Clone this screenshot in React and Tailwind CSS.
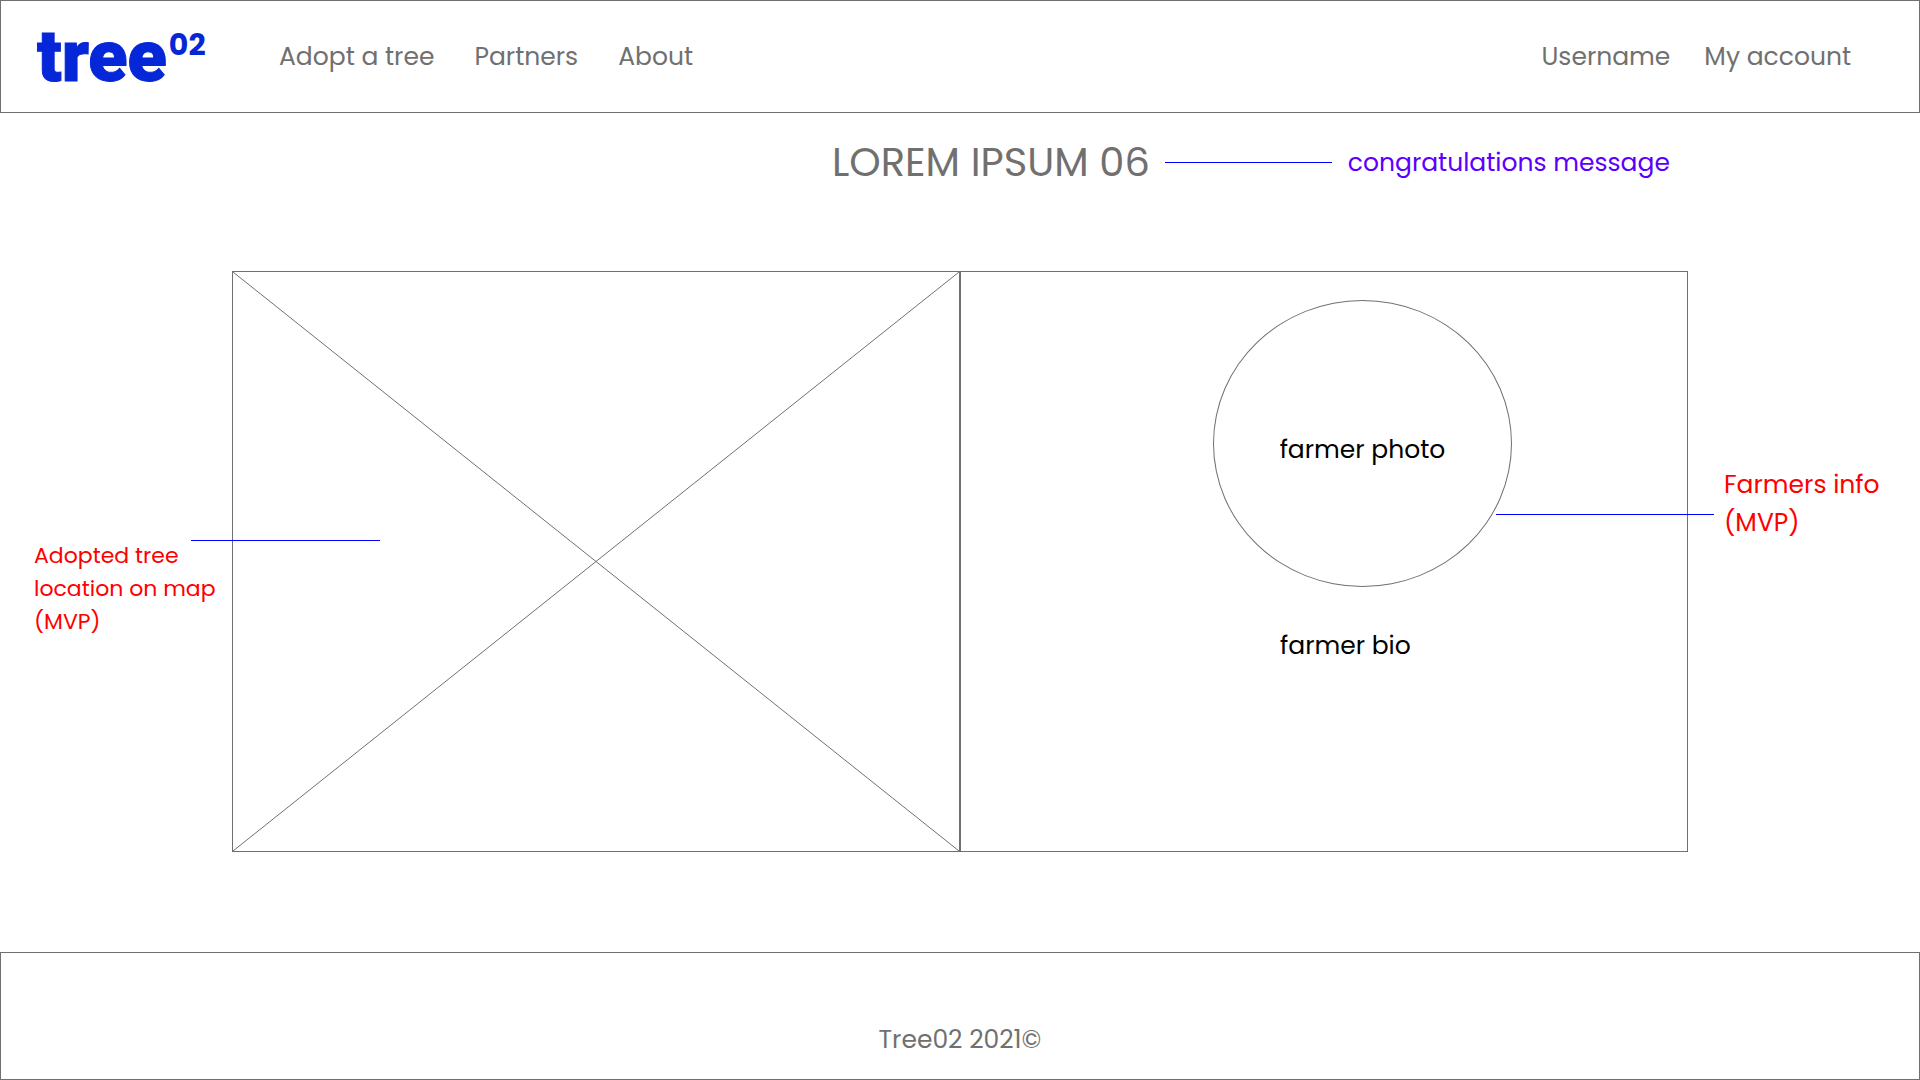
import React from "react";

const mainLinks = ["Adopt a tree", "Partners", "About"];
const accountLinks = ["Username", "My account"];

function NavLinks({ items, label, className }) {
  return (
    <nav aria-label={label} className={className}>
      {items.map((item) => (
        <a key={item} href="#" className="whitespace-nowrap">
          {item}
        </a>
      ))}
    </nav>
  );
}

function Logo() {
  return (
    <a
      href="#"
      className="flex w-[242px] shrink-0 items-start font-['Roboto',sans-serif] text-[72px] leading-[72px] font-black text-[#0527d8]"
    >
      <span className="[-webkit-text-stroke:1px_#0527d8]">tree</span>
      <sup className="top-0 pt-1.5 pl-0.5 font-['Poppins','Inter',sans-serif] text-[30px] leading-9 font-bold">02</sup>
    </a>
  );
}

function Header() {
  return (
    <header className="flex min-h-[113px] items-center border border-[#707070] pr-[68px] pl-9">
      <Logo />
      <NavLinks items={mainLinks} label="Main" className="flex gap-10" />
      <NavLinks items={accountLinks} label="Account" className="ml-auto flex gap-[34px]" />
    </header>
  );
}

function MapPlaceholder() {
  return (
    <section aria-label="Map" className="relative border border-[#707070]">
      <svg className="absolute inset-0 h-full w-full" viewBox="0 0 100 100" preserveAspectRatio="none" aria-hidden="true">
        <path d="M0 0L100 100M0 100L100 0" fill="none" stroke="#707070" strokeWidth="1" vectorEffect="non-scaling-stroke" />
      </svg>
    </section>
  );
}

function FarmerCard() {
  return (
    <section aria-label="Farmer" className="border border-[#707070] pt-7 pl-[252px] text-black">
      <div className="flex h-[287px] w-[299px] items-center justify-center rounded-[50%] border border-[#707070] pt-3">
        farmer photo
      </div>
      <p className="mt-10 pl-[67px]">farmer bio</p>
    </section>
  );
}

export default function App() {
  return (
    <div className="flex min-h-screen flex-col bg-white font-['Poppins','Inter',sans-serif] text-[25px] leading-[38px] text-[#707070]">
      <Header />
      <main className="flex flex-1 flex-col pt-[19px] pb-[100px]">
        <div className="grid grid-cols-[832fr_1088fr]">
          <div className="col-start-2 flex items-center">
            <h1 className="text-[40px] leading-[60px] whitespace-nowrap">LOREM IPSUM 06</h1>
            <span className="ml-[15px] h-px w-[167px] bg-[#0000ff]" />
            <p className="ml-4 pt-0.5 whitespace-nowrap text-[#5b00ff]">congratulations message</p>
          </div>
        </div>
        <div className="mt-[79px] grid flex-1 grid-cols-[232px_1fr_1fr_232px]">
          <aside className="pt-[268px] pl-[34px]">
            <div className="relative">
              <p className="text-[22px] leading-[33px] text-[#ff0000]">
                Adopted tree
                <br />
                location on map
                <br />
                (MVP)
              </p>
              <span className="absolute top-px left-[157px] z-10 h-px w-[189px] bg-[#0000ff]" />
            </div>
          </aside>
          <MapPlaceholder />
          <FarmerCard />
          <aside className="pt-[195px] pl-9">
            <div className="relative">
              <p className="text-[#ff0000]">
                Farmers info
                <br />
                (MVP)
              </p>
              <span className="absolute top-12 right-[206px] h-px w-[218px] bg-[#0000ff]" />
            </div>
          </aside>
        </div>
      </main>
      <footer className="flex min-h-32 items-end justify-center border border-[#707070] pb-5">
        <p>Tree02 2021©</p>
      </footer>
    </div>
  );
}
